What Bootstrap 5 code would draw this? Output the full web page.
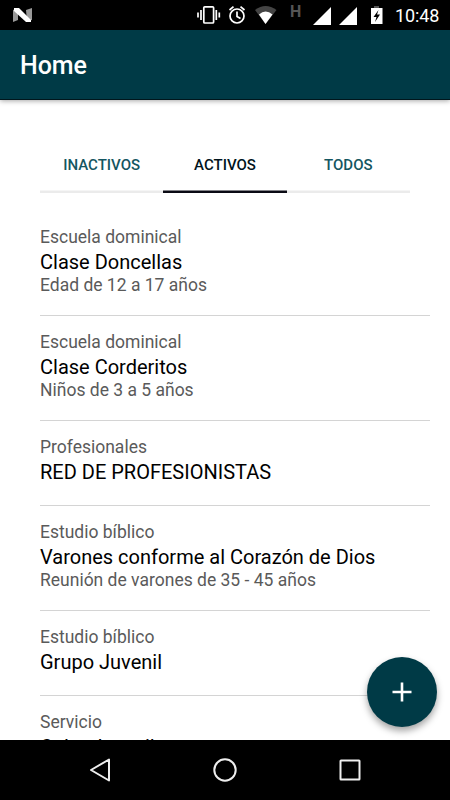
<!DOCTYPE html>
<html lang="es">
<head>
<meta charset="utf-8">
<meta name="viewport" content="width=device-width, initial-scale=1">
<title>Home</title>
<link href="https://cdn.jsdelivr.net/npm/bootstrap@5.3.0/dist/css/bootstrap.min.css" rel="stylesheet">
<style>
body{font-family:Roboto,"Liberation Sans",sans-serif;color:#000}
.statusbar{height:30px;padding:0 9px 0 13px}
.statusbar svg{display:block;flex:none}
.clock{font-size:18px;line-height:32px;width:46px;letter-spacing:-.1px;margin-left:12px;padding-top:1px}
.appbar{height:70px;background:#003a46;border-bottom:1px solid #00161c;box-shadow:0 1px 5px rgba(0,0,0,.35);padding:0 20px;z-index:1}
.appbar h1{font-size:25px;font-weight:500;line-height:72px;letter-spacing:-.1px}
.segment{margin:40px 40px 0;height:53px}
.segment .nav-link{font-size:15px;font-weight:500;line-height:50px;padding:0;color:#145661;border-radius:0;height:52.500px;box-shadow:inset 0 -2.500px #ebebeb}
.segment .nav-link.active{color:#00141c;box-shadow:inset 0 -2.500px #0a0a14}
.groups{padding-left:40px;padding-right:20px;margin-top:18px}
.group-item{padding:14px 0 18px;border-bottom:1px solid #d4d4d4}
.group-item.brief{padding-bottom:21px}
.kind,.detail{font-size:17.5px;line-height:24px;color:#5a5a5a;white-space:nowrap}
.title{font-size:20px;line-height:24px;margin:1px 0 0;font-weight:400;white-space:nowrap}
.detail{line-height:23px}
.fab{right:13px;bottom:13px;width:70px;height:70px;background:#003a46;box-shadow:0 4px 7px rgba(0,0,0,.36)}
.fab:hover{background:#003a46}
.softkeys{height:60px;padding:0 38px}
</style>
<script src="https://cdn.jsdelivr.net/npm/bootstrap@5.3.0/dist/js/bootstrap.bundle.min.js"></script>
</head>
<body class="vh-100 d-flex flex-column overflow-hidden bg-white">
<div class="statusbar bg-black text-white d-flex align-items-center flex-shrink-0">
  <svg width="20" height="30" viewBox="0 0 20 30"><path d="M0 10L5 8V20L0 22ZM13 10L19 8V20L14 21Z" fill="#999"/><path d="M1 8H6L18 20V22H13L1 11Z" fill="#fff"/></svg>
  <svg class="ms-auto" width="186" height="30" viewBox="197 0 186 30">
    <g fill="none" stroke="#fff" stroke-width="1.7"><rect x="203.8" y="6.8" width="9.8" height="16.2" rx="1"/><path d="M198 12.500V17.500M201 10V20M216.300 10V20M219.300 12.500V17.500"/><circle cx="237" cy="16" r="7"/><path d="M237 11.500V16.500L240.500 18.500M229.500 10L233.500 6.700M244.500 10L240.500 6.700"/></g>
    <path d="M255 10Q265.500 2 276.500 10L265.500 24Z" fill="#444"/><path d="M259 14.500Q265.500 8.500 272.500 14.500L265.500 24Z" fill="#fff"/>
    <text x="290" y="17" font-size="16" font-weight="700" fill="#555">H</text>
    <path d="M313 25L331 7V25ZM339 25L357 7V25Z" fill="#fff"/>
    <path d="M374 6H379V8H374Z" fill="#555"/><path d="M371 8H382.500V24H371Z" fill="#fff"/><path d="M378.500 10L373.500 17H376.500L375 22L380 14.500H377Z" fill="#000"/>
  </svg>
  <span class="clock">10:48</span>
</div>
<header class="appbar navbar position-relative flex-shrink-0"><h1 class="m-0 text-white">Home</h1></header>
<main class="position-relative flex-grow-1 overflow-hidden">
  <nav class="segment nav nav-justified text-center">
    <a class="nav-link" href="#">INACTIVOS</a>
    <a class="nav-link active" href="#" aria-current="page">ACTIVOS</a>
    <a class="nav-link" href="#">TODOS</a>
  </nav>
  <div class="groups">
    <div class="group-item"><div class="kind">Escuela dominical</div><h2 class="title">Clase Doncellas</h2><div class="detail">Edad de 12 a 17 años</div></div>
    <div class="group-item"><div class="kind">Escuela dominical</div><h2 class="title">Clase Corderitos</h2><div class="detail">Niños de 3 a 5 años</div></div>
    <div class="group-item brief"><div class="kind">Profesionales</div><h2 class="title">RED DE PROFESIONISTAS</h2></div>
    <div class="group-item"><div class="kind">Estudio bíblico</div><h2 class="title">Varones conforme al Corazón de Dios</h2><div class="detail">Reunión de varones de 35 - 45 años</div></div>
    <div class="group-item brief"><div class="kind">Estudio bíblico</div><h2 class="title">Grupo Juvenil</h2></div>
    <div class="group-item brief"><div class="kind">Servicio</div><h2 class="title">Culto Juvenil</h2></div>
  </div>
  <button class="fab btn rounded-circle border-0 position-absolute d-flex align-items-center justify-content-center p-0" aria-label="Agregar"><svg width="20" height="20" viewBox="0 0 20 20"><path d="M10 .5V19.500M.5 10H19.500" stroke="#fff" stroke-width="2.600"/></svg></button>
</main>
<footer class="softkeys bg-black d-flex justify-content-around align-items-center flex-shrink-0">
  <svg width="24" height="26" viewBox="0 0 24 26"><path d="M21 2.500V23.500L3 13Z" fill="none" stroke="#eee" stroke-width="2" stroke-linejoin="round"/></svg>
  <svg width="26" height="26" viewBox="0 0 26 26"><circle cx="13" cy="13" r="10.700" fill="none" stroke="#eee" stroke-width="2"/></svg>
  <svg width="24" height="24" viewBox="0 0 24 24"><rect x="2.500" y="2.500" width="19" height="19" rx=".5" fill="none" stroke="#eee" stroke-width="2"/></svg>
</footer>
</body>
</html>
